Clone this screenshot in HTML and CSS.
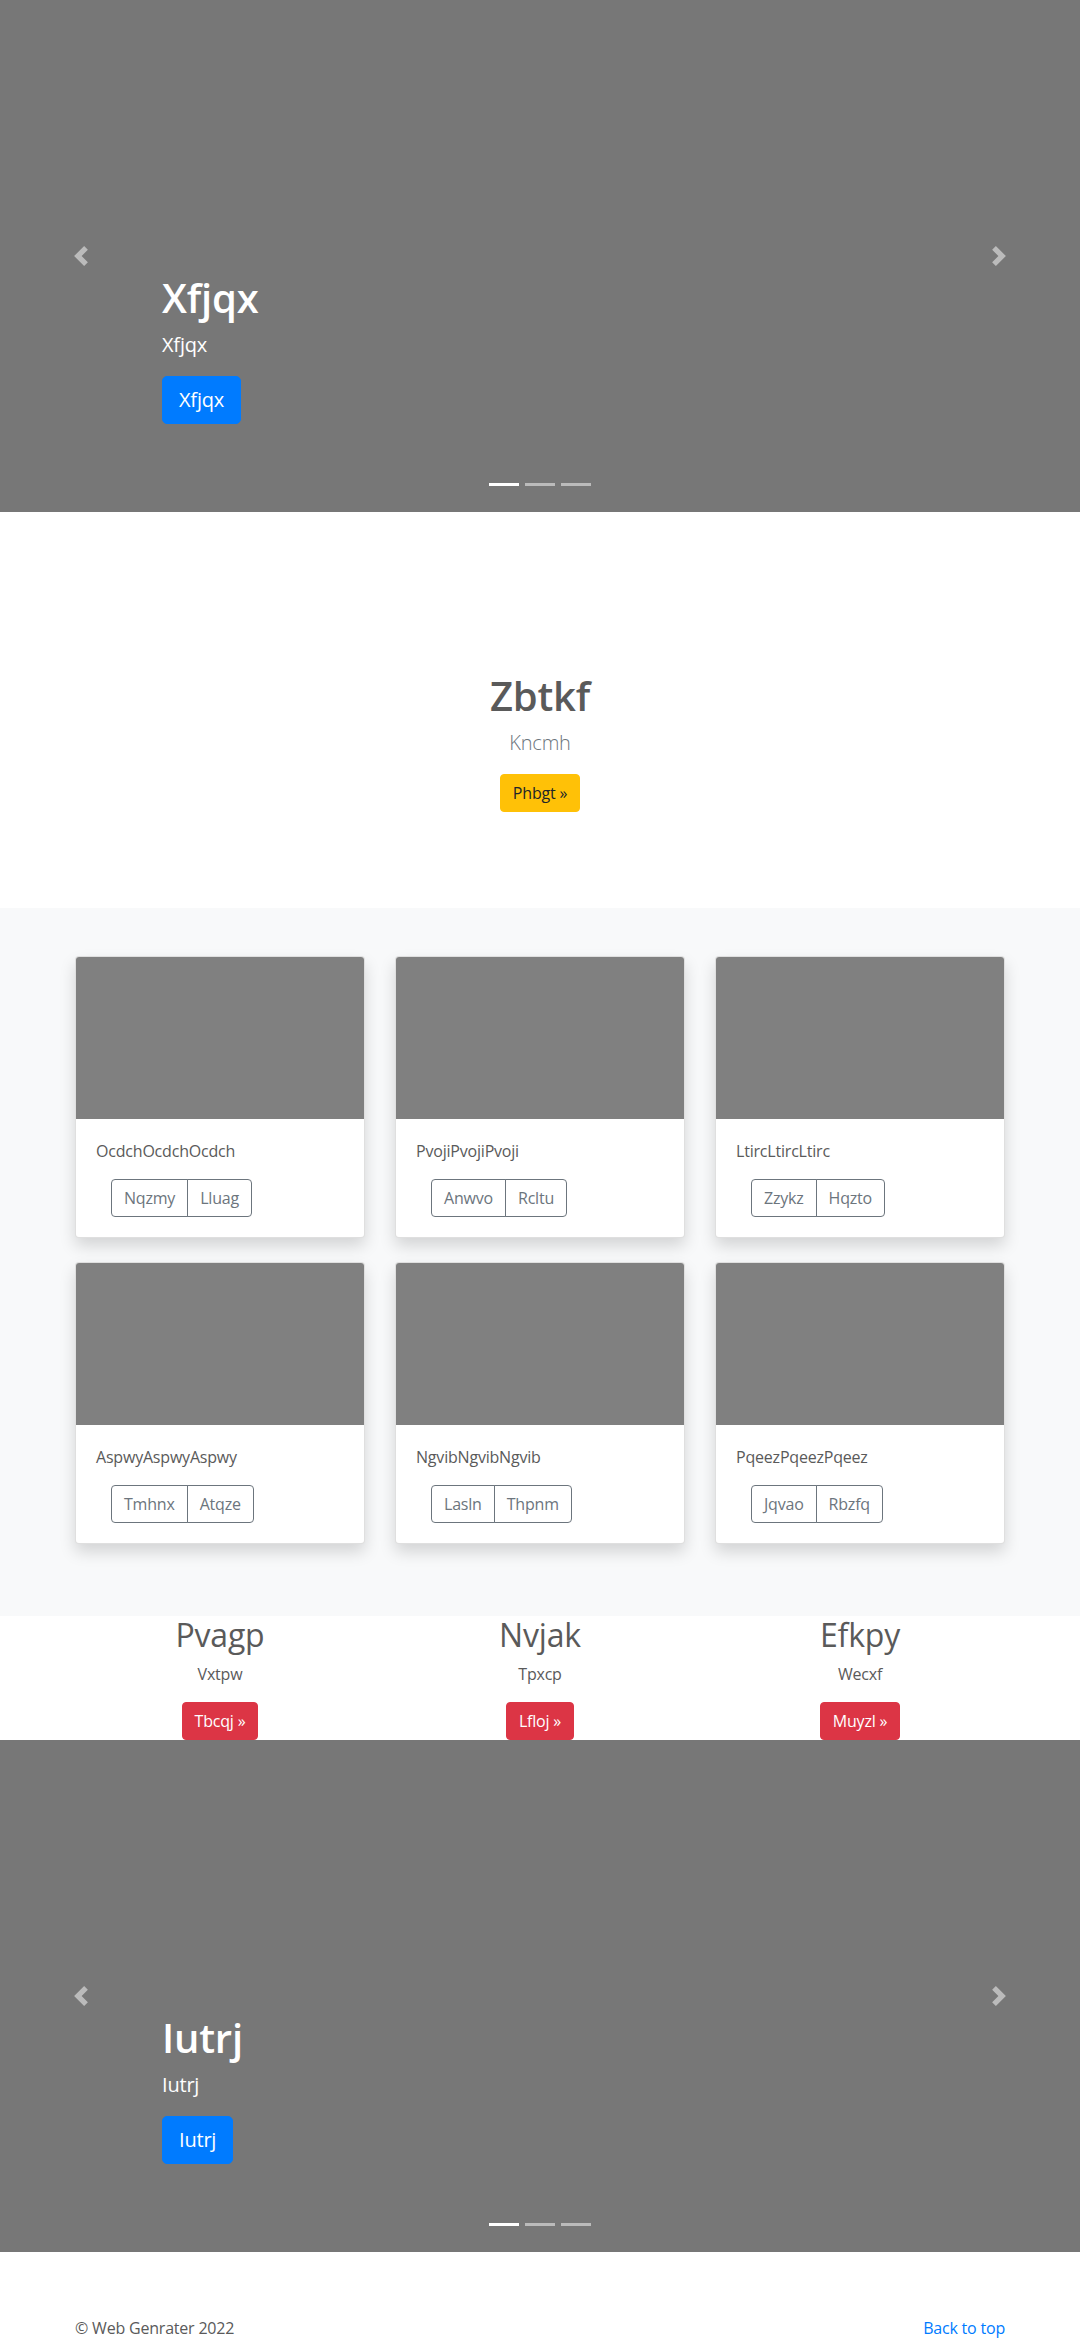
FILE: index.html
```html
<!DOCTYPE html>
<html lang="en">
<head>
<meta charset="utf-8">
<title>Carousel</title>
<link rel="stylesheet" href="styles.css">
</head>
<body>
<div class="carousel">
  <div class="carousel-caption">
    <h1 class="caption-title">Xfjqx</h1>
    <p class="caption-text">Xfjqx</p>
    <p class="caption-action"><a class="btn btn-lg btn-primary" href="#">Xfjqx</a></p>
  </div>
  <a class="control control-prev" href="#"><svg class="control-icon" viewBox="0 0 8 8" width="20" height="20"><path fill="#fff" d="M5.25 0l-4 4 4 4 1.5-1.5L4.25 4l2.5-2.5L5.25 0z"/></svg></a>
  <a class="control control-next" href="#"><svg class="control-icon" viewBox="0 0 8 8" width="20" height="20"><path fill="#fff" d="M2.75 0l-1.5 1.5L3.75 4l-2.5 2.5L2.75 8l4-4-4-4z"/></svg></a>
  <ol class="indicators"><li class="active"></li><li></li><li></li></ol>
</div>

<section class="jumbotron">
  <h1 class="jumbo-title">Zbtkf</h1>
  <p class="lead">Kncmh</p>
  <p class="jumbo-action"><a class="btn btn-warning" href="#">Phbgt »</a></p>
</section>

<div class="album">
  <div class="container">
    <div class="card-grid">
      <div class="card"><div class="card-img"></div><div class="card-body"><p class="card-text">OcdchOcdchOcdch</p><div class="btn-group"><button class="btn btn-outline">Nqzmy</button><button class="btn btn-outline">Lluag</button></div></div></div>
      <div class="card"><div class="card-img"></div><div class="card-body"><p class="card-text">PvojiPvojiPvoji</p><div class="btn-group"><button class="btn btn-outline">Anwvo</button><button class="btn btn-outline">Rcltu</button></div></div></div>
      <div class="card"><div class="card-img"></div><div class="card-body"><p class="card-text">LtircLtircLtirc</p><div class="btn-group"><button class="btn btn-outline">Zzykz</button><button class="btn btn-outline">Hqzto</button></div></div></div>
      <div class="card"><div class="card-img"></div><div class="card-body"><p class="card-text">AspwyAspwyAspwy</p><div class="btn-group"><button class="btn btn-outline">Tmhnx</button><button class="btn btn-outline">Atqze</button></div></div></div>
      <div class="card"><div class="card-img"></div><div class="card-body"><p class="card-text">NgvibNgvibNgvib</p><div class="btn-group"><button class="btn btn-outline">Lasln</button><button class="btn btn-outline">Thpnm</button></div></div></div>
      <div class="card"><div class="card-img"></div><div class="card-body"><p class="card-text">PqeezPqeezPqeez</p><div class="btn-group"><button class="btn btn-outline">Jqvao</button><button class="btn btn-outline">Rbzfq</button></div></div></div>
    </div>
  </div>
</div>

<div class="container marketing">
  <div class="col">
    <h2 class="mk-title">Pvagp</h2>
    <p class="mk-text">Vxtpw</p>
    <p class="mk-action"><a class="btn btn-danger" href="#">Tbcqj »</a></p>
  </div>
  <div class="col">
    <h2 class="mk-title">Nvjak</h2>
    <p class="mk-text">Tpxcp</p>
    <p class="mk-action"><a class="btn btn-danger" href="#">Lfloj »</a></p>
  </div>
  <div class="col">
    <h2 class="mk-title">Efkpy</h2>
    <p class="mk-text">Wecxf</p>
    <p class="mk-action"><a class="btn btn-danger" href="#">Muyzl »</a></p>
  </div>
</div>

<div class="carousel">
  <div class="carousel-caption">
    <h1 class="caption-title">Iutrj</h1>
    <p class="caption-text">Iutrj</p>
    <p class="caption-action"><a class="btn btn-lg btn-primary" href="#">Iutrj</a></p>
  </div>
  <a class="control control-prev" href="#"><svg class="control-icon" viewBox="0 0 8 8" width="20" height="20"><path fill="#fff" d="M5.25 0l-4 4 4 4 1.5-1.5L4.25 4l2.5-2.5L5.25 0z"/></svg></a>
  <a class="control control-next" href="#"><svg class="control-icon" viewBox="0 0 8 8" width="20" height="20"><path fill="#fff" d="M2.75 0l-1.5 1.5L3.75 4l-2.5 2.5L2.75 8l4-4-4-4z"/></svg></a>
  <ol class="indicators"><li class="active"></li><li></li><li></li></ol>
</div>

<footer class="container footer">
  <p class="back-top"><a href="#">Back to top</a></p>
  <p class="copy">© Web Genrater 2022</p>
</footer>
</body>
</html>
```

FILE: styles.css
```css
* { box-sizing: border-box; }

body {
  margin: 0;
  padding-bottom: 48px;
  font-family: "Open Sans", "Noto Sans", sans-serif;
  font-size: 16px;
  line-height: 1.5;
  letter-spacing: -0.2px;
  color: #5a5a5a;
  background: #fff;
}

a { color: #007bff; text-decoration: none; }

.container {
  width: 960px;
  margin: 0 auto;
  padding: 0 15px;
}

/* buttons */
.btn {
  display: inline-block;
  font-family: inherit;
  font-size: 16px;
  line-height: 24px;
  font-weight: 400;
  letter-spacing: -0.2px;
  padding: 6px 12px;
  border: 1px solid transparent;
  border-radius: 4px;
  text-align: center;
  vertical-align: middle;
  cursor: pointer;
}
.btn-lg {
  font-size: 20px;
  line-height: 30px;
  padding: 8px 16px;
  border-radius: 5px;
}
.btn-primary { background: #007bff; border-color: #007bff; color: #fff; }
.btn-warning { background: #ffc107; border-color: #ffc107; color: #212529; }
.btn-danger { background: #dc3545; border-color: #dc3545; color: #fff; }
.btn-outline {
  background: transparent;
  border-color: #6c757d;
  color: #6c757d;
}

/* carousel */
.carousel {
  position: relative;
  height: 512px;
  background: #777;
  margin-bottom: 64px;
  overflow: hidden;
}
.carousel-caption {
  position: absolute;
  left: 15%;
  right: 15%;
  bottom: 52px;
  padding: 20px 0;
  color: #fff;
  z-index: 10;
}
.caption-title {
  margin: 0 0 8px;
  font-size: 40px;
  line-height: 1.2;
  font-weight: 600;
}
.caption-text {
  margin: 0 0 16px;
  font-size: 20px;
  line-height: 30px;
}
.caption-action { margin: 0 0 16px; }

.control {
  position: absolute;
  top: 0;
  bottom: 0;
  width: 15%;
  display: flex;
  align-items: center;
  justify-content: center;
  opacity: 0.5;
}
.control-prev { left: 0; }
.control-next { right: 0; }
.control-icon { display: block; width: 20px; height: 20px; }

.indicators {
  position: absolute;
  left: 0;
  right: 0;
  bottom: 0;
  margin: 0 0 16px;
  padding: 0;
  list-style: none;
  display: flex;
  justify-content: center;
  z-index: 15;
}
.indicators li {
  width: 30px;
  height: 23px;
  margin: 0 3px;
  border-top: 10px solid transparent;
  border-bottom: 10px solid transparent;
  background: #fff;
  background-clip: padding-box;
  opacity: 0.5;
}
.indicators li.active { opacity: 1; }

/* jumbotron */
.jumbotron {
  padding: 96px 0;
  text-align: center;
}
.jumbo-title {
  margin: 0 0 8px;
  font-size: 40px;
  line-height: 1.2;
  font-weight: 600;
}
.lead {
  margin: 0 0 16px;
  font-size: 20px;
  line-height: 30px;
  font-weight: 300;
  color: #6c757d;
}
.jumbo-action { margin: 0; }

/* album */
.album {
  background: #f8f9fa;
  padding: 48px 0;
}
.card-grid {
  display: grid;
  grid-template-columns: repeat(3, 1fr);
  column-gap: 30px;
}
.card {
  margin-bottom: 24px;
  background: #fff;
  border: 1px solid rgba(0, 0, 0, 0.125);
  border-radius: 4px;
  box-shadow: 0 8px 16px rgba(0, 0, 0, 0.15);
  overflow: hidden;
}
.card-img {
  height: 162px;
  background: #808080;
}
.card-body { padding: 20px; }
.card-text { margin: 0 0 16px; }
.btn-group {
  display: inline-flex;
  margin-left: 15px;
}
.btn-group .btn:first-child {
  border-top-right-radius: 0;
  border-bottom-right-radius: 0;
}
.btn-group .btn + .btn {
  margin-left: -1px;
  border-top-left-radius: 0;
  border-bottom-left-radius: 0;
}

/* marketing */
.marketing {
  display: grid;
  grid-template-columns: repeat(3, 1fr);
  column-gap: 30px;
  text-align: center;
}
.mk-title {
  margin: 0 0 8px;
  font-size: 32px;
  line-height: 1.2;
  font-weight: 400;
}
.mk-text { margin: 0 12px 16px; }
.mk-action { margin: 0; }

/* footer */
.footer { display: flow-root; }
.back-top { float: right; margin: 0 0 16px; }
.copy { margin: 0 0 16px; }
```
